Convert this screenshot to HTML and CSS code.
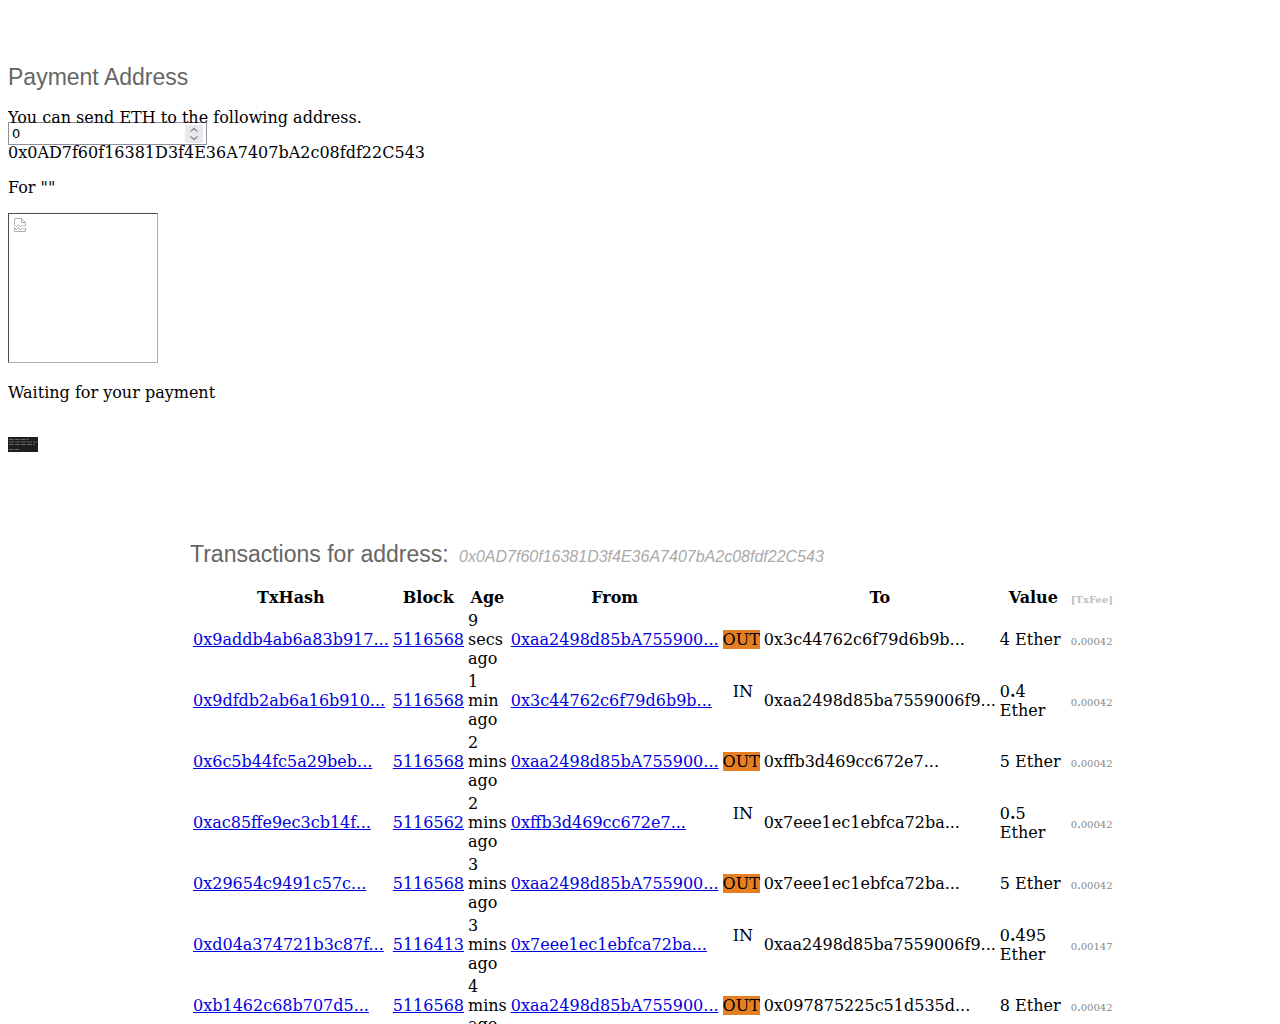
FILE: index.html
```html
<!DOCTYPE html>
<html lang="en">
<head>
    <meta charset="UTF-8">
    <meta name="viewport" content="width=device-width, initial-scale=1.0">
    <title>Payment Address</title>
    <link rel="stylesheet" href="styles.css">
</head>
<body>
    <div class="payment">
        <h2>Payment Address</h2>
        <p>You can send ETH to the following address.</p>
        <div class="amount">
            <input type="number" id="amount" value="0" aria-label="Amount">
            <svg class="spinner" viewBox="0 0 18 18" aria-hidden="true">
                <path d="M5.5 6.5 L9 3.5 L12.5 6.5 M5.5 11.5 L9 14.5 L12.5 11.5"/>
            </svg>
        </div>
        <p>0x0AD7f60f16381D3f4E36A7407bA2c08fdf22C543</p>
        <p>For ""</p>
        <div class="qrcode">
            <svg width="12" height="14" viewBox="0 0 12 14" aria-hidden="true">
                <path d="M.5 6.5 V.5 H7.5 L11.5 4.5 V7.5 L10 8.5 L8.5 7 L6.5 9 L4.5 6.5 L2.5 8.5 L.5 6.5 M7.5 .5 V4.5 H11.5 M.5 9.5 V13.5 H11.5 V10.5 L10 11.5 L8.5 10 L6.5 12 L4.5 9.5 L2.5 11.5 Z"/>
            </svg>
        </div>
        <p class="status">Waiting for your payment</p>
        <svg class="loader" width="30" height="15" viewBox="0 0 30 15" aria-hidden="true">
            <rect width="30" height="15" fill="#1e1e1e"/>
            <path d="M1 2.5 H21 M1 5 H29 M1 7.5 H27 M1 12.5 H11" stroke="#666" stroke-dasharray="5 1"/>
        </svg>
    </div>

    <div class="transactions">
        <h2>Transactions for address: <span class="address">0x0AD7f60f16381D3f4E36A7407bA2c08fdf22C543</span></h2>
        <table>
            <thead>
                <tr>
                    <th>TxHash</th>
                    <th>Block</th>
                    <th>Age</th>
                    <th>From</th>
                    <th></th>
                    <th>To</th>
                    <th class="value">Value</th>
                    <th><span class="fee">[TxFee]</span></th>
                </tr>
            </thead>
            <tbody>
                <tr>
                    <td><a href="#">0x9addb4ab6a83b917...</a></td>
                    <td><a href="#">5116568</a></td>
                    <td>9 secs ago</td>
                    <td><a href="#">0xaa2498d85bA755900...</a></td>
                    <td><span class="out">OUT</span></td>
                    <td>0x3c44762c6f79d6b9b...</td>
                    <td>4 Ether</td>
                    <td><span class="fee">0<b>.</b>00042</span></td>
                </tr>
                <tr>
                    <td><a href="#">0x9dfdb2ab6a16b910...</a></td>
                    <td><a href="#">5116568</a></td>
                    <td>1 min ago</td>
                    <td><a href="#">0x3c44762c6f79d6b9b...</a></td>
                    <td><span class="in">&nbsp;&nbsp;IN &nbsp;&nbsp;</span></td>
                    <td>0xaa2498d85ba7559006f9...</td>
                    <td>0<b>.</b>4 Ether</td>
                    <td><span class="fee">0<b>.</b>00042</span></td>
                </tr>
                <tr>
                    <td><a href="#">0x6c5b44fc5a29beb...</a></td>
                    <td><a href="#">5116568</a></td>
                    <td>2 mins ago</td>
                    <td><a href="#">0xaa2498d85bA755900...</a></td>
                    <td><span class="out">OUT</span></td>
                    <td>0xffb3d469cc672e7...</td>
                    <td>5 Ether</td>
                    <td><span class="fee">0<b>.</b>00042</span></td>
                </tr>
                <tr>
                    <td><a href="#">0xac85ffe9ec3cb14f...</a></td>
                    <td><a href="#">5116562</a></td>
                    <td>2 mins ago</td>
                    <td><a href="#">0xffb3d469cc672e7...</a></td>
                    <td><span class="in">&nbsp;&nbsp;IN &nbsp;&nbsp;</span></td>
                    <td>0x7eee1ec1ebfca72ba...</td>
                    <td>0<b>.</b>5 Ether</td>
                    <td><span class="fee">0<b>.</b>00042</span></td>
                </tr>
                <tr>
                    <td><a href="#">0x29654c9491c57c...</a></td>
                    <td><a href="#">5116568</a></td>
                    <td>3 mins ago</td>
                    <td><a href="#">0xaa2498d85bA755900...</a></td>
                    <td><span class="out">OUT</span></td>
                    <td>0x7eee1ec1ebfca72ba...</td>
                    <td>5 Ether</td>
                    <td><span class="fee">0<b>.</b>00042</span></td>
                </tr>
                <tr>
                    <td><a href="#">0xd04a374721b3c87f...</a></td>
                    <td><a href="#">5116413</a></td>
                    <td>3 mins ago</td>
                    <td><a href="#">0x7eee1ec1ebfca72ba...</a></td>
                    <td><span class="in">&nbsp;&nbsp;IN &nbsp;&nbsp;</span></td>
                    <td>0xaa2498d85ba7559006f9...</td>
                    <td>0<b>.</b>495 Ether</td>
                    <td><span class="fee">0<b>.</b>00147</span></td>
                </tr>
                <tr>
                    <td><a href="#">0xb1462c68b707d5...</a></td>
                    <td><a href="#">5116568</a></td>
                    <td>4 mins ago</td>
                    <td><a href="#">0xaa2498d85bA755900...</a></td>
                    <td><span class="out">OUT</span></td>
                    <td>0x097875225c51d535d...</td>
                    <td>8 Ether</td>
                    <td><span class="fee">0<b>.</b>00042</span></td>
                </tr>
            </tbody>
        </table>
    </div>
</body>
</html>
```
FILE: styles.css
```css
body {
    margin: 8px;
    font-family: "DejaVu Serif", serif;
    font-size: 16px;
    line-height: 19px;
    color: #000;
    background-color: #fff;
}
h2 {
    margin: 0 0 18px;
    font-family: "Liberation Sans", Arial, sans-serif;
    font-size: 23px;
    font-weight: normal;
    line-height: 26px;
    color: #666;
}
p {
    margin: 16px 0;
}
.payment {
    padding-top: 56px;
}
/* the amount box sits behind the two lines of text */
.amount {
    position: absolute;
    z-index: -1;
    top: 122px;
    left: 8px;
    width: 199px;
    height: 23px;
}
.amount input {
    box-sizing: border-box;
    width: 100%;
    height: 100%;
    padding: 0 3px 1px;
    border: 1px solid #8f8f9d;
    font-family: "DejaVu Sans", sans-serif;
    font-size: 13px;
    color: #000;
    background-color: #fff;
    appearance: textfield;
}
.amount input::-webkit-inner-spin-button {
    display: none;
}
.spinner {
    position: absolute;
    top: 3px;
    right: 4px;
    width: 18px;
    height: 18px;
    background-color: #e9e9ed;
    fill: none;
    stroke: #8f8f9d;
    stroke-width: 1.5;
}
.qrcode {
    box-sizing: border-box;
    width: 150px;
    height: 150px;
    padding: 4px 5px;
    border: 1px solid;
    border-color: #4d4d4d #b0b0b0 #b0b0b0 #4d4d4d;
}
.qrcode svg {
    display: block;
    fill: none;
    stroke: #b0b0b0;
}
.status {
    margin: 20px 0 35px;
}
.loader {
    display: block;
}
.transactions {
    max-width: 900px;
    margin: 89px auto 0;
}
.address {
    margin-left: 4px;
    font-size: 16px;
    font-style: italic;
    line-height: 16px;
    color: #aaa;
}
a {
    color: #0000e0;
}
.value {
    min-width: 67px;
}
.out {
    background-color: #e67e22;
}
.fee {
    font-size: 10px;
    line-height: 10px;
    color: #888;
}
th .fee {
    color: silver;
}
```
